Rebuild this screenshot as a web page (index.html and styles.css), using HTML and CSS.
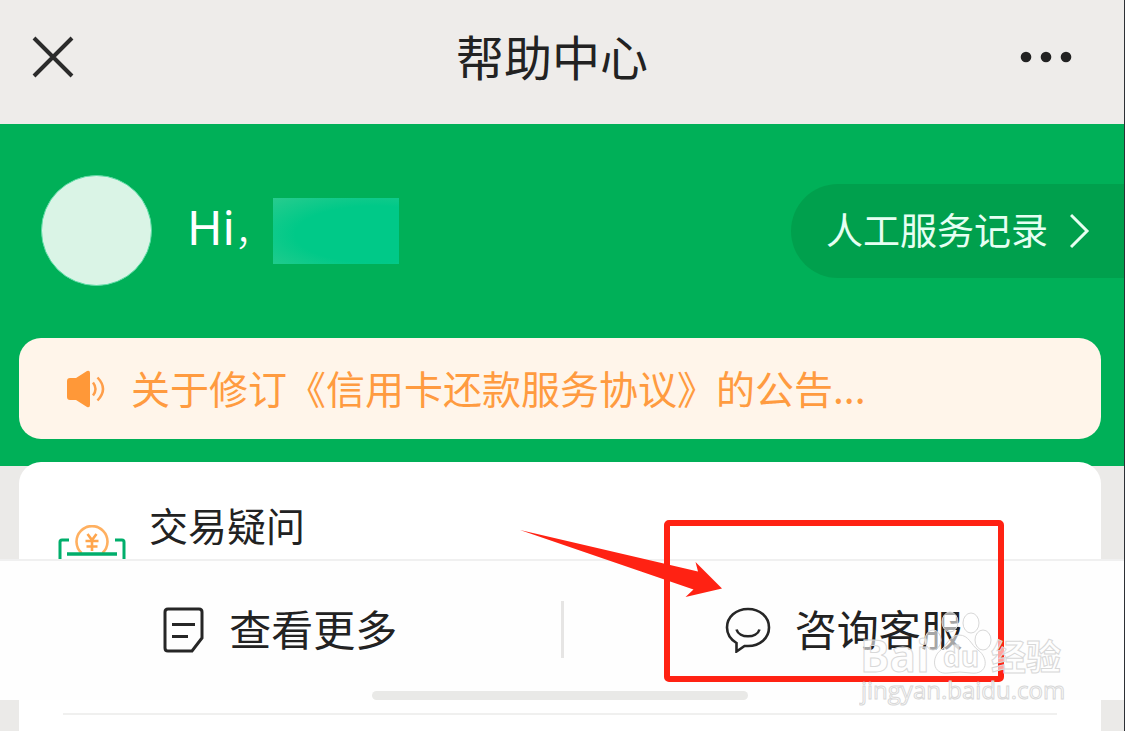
FILE: index.html
```html
<!DOCTYPE html>
<html lang="zh-CN">

<head>
  <meta charset="UTF-8">
  <meta name="viewport" content="width=device-width, initial-scale=1.0">
  <title>帮助中心</title>
  <link rel="stylesheet" href="styles.css">
</head>

<body>
  <div class="page">
    <!-- header -->
    <header class="header">
      <button class="icon-btn" aria-label="关闭">
        <svg width="42" height="42" viewBox="0 0 42 42" fill="none" stroke="#2b2b2b" stroke-width="4">
          <path d="M2 2L40 40M40 2L2 40" />
        </svg>
      </button>
      <h1 class="title">帮助中心</h1>
      <button class="icon-btn btn-more" aria-label="更多">
        <svg width="52" height="12" viewBox="0 0 52 12" fill="#222">
          <circle cx="6" cy="6" r="5.3" />
          <circle cx="26" cy="6" r="5.3" />
          <circle cx="46" cy="6" r="5.3" />
        </svg>
      </button>
    </header>

    <!-- user -->
    <section class="hero">
      <div class="user">
        <div class="avatar"></div>
        <span class="hi">Hi<span class="comma">，</span></span>
        <div class="name"></div>
        <a class="record" href="#">
          <span class="label">人工服务记录</span>
          <svg width="20" height="36" viewBox="0 0 20 36" fill="none" stroke="#e6fff2" stroke-width="3">
            <path d="M1 2L17 18L1 34" />
          </svg>
        </a>
      </div>
      <a class="notice" href="#">
        <svg width="38" height="38" viewBox="0 0 38 38">
          <path d="M3 8H9L20 1Q23 0 23 3V35Q23 38 20 37L9 30H3Q0 30 0 27V11Q0 8 3 8Z" fill="#ff9838" />
          <path d="M26 12.500Q31 19 26 25.500M30.500 7.500Q41.500 19 30.500 30.500" fill="none" stroke="#ff9e4a" stroke-width="2.500" />
        </svg>
        <span class="label">关于修订《信用卡还款服务协议》的公告...</span>
      </a>
    </section>

    <!-- list -->
    <main class="card">
      <div class="row">
        <svg class="row-icon" width="68" height="68" viewBox="0 0 68 68" fill="none">
          <path d="M23.500 28A15.500 15.500 0 1 1 44.500 28" stroke="#ffb060" stroke-width="2.600" />
          <path d="M29.500 9L34 15L38.500 9M27.500 16H40.500M28.500 21.500H39.500M34 15V26" stroke="#ffa64d" stroke-width="2.600" />
          <path d="M11 15H4Q2 15 2 17V64Q2 66 4 66H64Q66 66 66 64V17Q66 15 64 15H57" stroke="#00ae6b" stroke-width="3" />
          <path d="M9 29H59" stroke="#00ae6b" stroke-width="3.500" />
        </svg>
        <h2 class="row-title">交易疑问</h2>
      </div>
      <hr class="line">
    </main>

    <!-- bottom bar -->
    <nav class="bar">
      <button class="bar-btn">
        <svg width="42" height="46" viewBox="0 0 42 46" fill="none" stroke="#262626" stroke-width="3">
          <path d="M5 2H36Q39 2 39 5V31L29 44H5Q2 44 2 41V5Q2 2 5 2Z" />
          <path d="M9 17.500H32M9 29.500H25" />
        </svg>
        <span class="label">查看更多</span>
      </button>
      <div class="split"></div>
      <button class="bar-btn">
        <svg width="46" height="46" viewBox="0 0 46 46" fill="none" stroke="#262626" stroke-width="2.600">
          <path d="M11.500 36C5 32 2 26.500 2 20.500C2 10 11 2 23 2C35 2 44 10 44 20.500C44 31 35 39 23 39H19.500L11.500 44.500Z" />
          <path d="M11.500 22.500C14 31.500 32 31.500 34.500 22.500" />
        </svg>
        <span class="label">咨询客服</span>
      </button>
      <div class="indicator"></div>
      <div class="mark"></div>
      <svg class="arrow" width="202" height="68" viewBox="0 0 202 68">
        <path d="M0 0L178 41.500L175.500 32L202 58.500L165.500 67L173.500 59.500Z" fill="#ff2213" />
      </svg>
      <svg class="watermark" width="206" height="100" viewBox="0 0 206 100">
        <ellipse cx="91" cy="13" rx="8" ry="10" />
        <ellipse cx="112" cy="14" rx="8" ry="10" />
        <ellipse cx="74" cy="31" rx="8" ry="10" />
        <ellipse cx="124" cy="31" rx="8" ry="10" />
        <path d="M100 26C91 26 88 36 82 41C72 48 73 66 89 64Q101 62 112 64C129 66 130 49 119 41C112 36 110 26 100 26Z" />
        <text class="wm-logo" x="1" y="63">Bai</text>
        <text class="wm-du" x="84" y="58">du</text>
        <text class="wm-cn" x="132" y="61">经验</text>
        <text class="wm-url" x="2" y="90">jingyan.baidu.com</text>
      </svg>
    </nav>
  </div>
</body>

</html>
```
FILE: styles.css
```css
/* reset start */
* {
  box-sizing: border-box;
}

body,
h1,
h2 {
  margin: 0;
  font-weight: 400;
}

body {
  font-family: "Noto Sans CJK SC", sans-serif;
  color: #222;
}

button {
  padding: 0;
  border: 0;
  background: none;
  font: inherit;
  color: inherit;
  cursor: pointer;
}

a {
  color: inherit;
  text-decoration: none;
}

svg {
  display: block;
  flex: none;
}

/* reset end */

.page {
  position: relative;
  display: flex;
  flex-direction: column;
  min-height: 100vh;
  border-right: 1px solid #2d3035;
  background: #ebeae8;
}

.label {
  padding-bottom: 4px;
}

/* header start */
.header {
  display: flex;
  align-items: center;
  justify-content: space-between;
  height: 124px;
  padding: 0 52px 10px 32px;
  background: #eeecea;
}

.icon-btn {
  display: flex;
  width: 52px;
}

.title {
  padding-bottom: 4px;
  font-size: 48px;
  line-height: 64px;
}

/* header end */

/* hero start */
.hero {
  padding: 51px 0 27px;
  background: #00b058;
}

.user {
  display: flex;
  align-items: center;
  padding-left: 41px;
  color: #fff;
}

.avatar {
  width: 111px;
  height: 111px;
  border: 1px solid #5fdca6;
  border-radius: 50%;
  background: #daf4e6;
}

.hi {
  margin-left: 35px;
  padding-bottom: 4px;
  font-family: "Noto Sans", "Noto Sans CJK SC", sans-serif;
  font-size: 48px;
  line-height: 64px;
}

.comma {
  font-size: 38px;
  font-weight: 300;
}

.name {
  width: 126px;
  height: 66px;
  background: radial-gradient(ellipse at 80% 55%, #00c988 55%, #28cc8e 100%);
}

.record {
  display: flex;
  align-items: center;
  gap: 22px;
  height: 94px;
  margin-left: auto;
  padding: 0 34px 0 35px;
  border-radius: 47px 0 0 47px;
  background: #00a04d;
  font-size: 37px;
  color: #e6fff2;
}

.notice {
  display: flex;
  align-items: center;
  gap: 26px;
  height: 101px;
  margin: 52px 23px 0 19px;
  padding: 0 48px;
  border-radius: 22px;
  background: #fff5ea;
  font-size: 39px;
  color: #ff9b40;
  white-space: nowrap;
}

/* hero end */

/* card start */
.card {
  position: relative;
  flex: 1;
  margin: -4px 23px 0 19px;
  border-radius: 22px 22px 0 0;
  background: #fff;
}

.row {
  display: flex;
  gap: 23px;
  height: 251px;
  padding: 34px 39px;
}

.row-icon {
  margin-top: 29px;
}

.row-title {
  font-size: 39px;
  line-height: 56px;
}

.line {
  height: 2px;
  margin: 0 44px;
  border: 0;
  background: #f0f0ef;
}

/* card end */

/* bottom bar start */
.bar {
  position: absolute;
  right: 0;
  bottom: 31px;
  left: 0;
  display: flex;
  align-items: center;
  height: 141px;
  padding-bottom: 2px;
  border-top: 2px solid #f0f0f0;
  background: #fefefe;
}

.bar-btn {
  display: flex;
  flex: 1;
  align-items: center;
  justify-content: center;
  gap: 24px;
  font-size: 42px;
}

.split {
  width: 3px;
  height: 57px;
  background: #e6e5e4;
}

.indicator {
  position: absolute;
  bottom: 0;
  left: 50%;
  width: 376px;
  height: 9px;
  margin-left: -190px;
  border-radius: 5px;
  background: #e9e9e7;
}

/* bottom bar end */

/* marks start */
.mark {
  position: absolute;
  right: 120px;
  bottom: 18px;
  width: 340px;
  height: 162px;
  border: 6px solid #ff2213;
  border-radius: 5px;
}

.arrow {
  position: absolute;
  right: 402px;
  bottom: 102px;
}

.watermark {
  position: absolute;
  right: 59px;
  bottom: -9px;
  fill: rgba(255, 255, 255, 0.6);
  stroke: #d8d8d8;
  stroke-width: 1px;
}

.wm-logo {
  font: 700 44px "Open Sans", sans-serif;
}

.wm-du {
  font: 700 28px "Open Sans", sans-serif;
}

.wm-cn {
  font: 700 35px "Noto Sans CJK SC", sans-serif;
}

.wm-url {
  font: 400 24px "Open Sans", sans-serif;
}

/* marks end */
```
